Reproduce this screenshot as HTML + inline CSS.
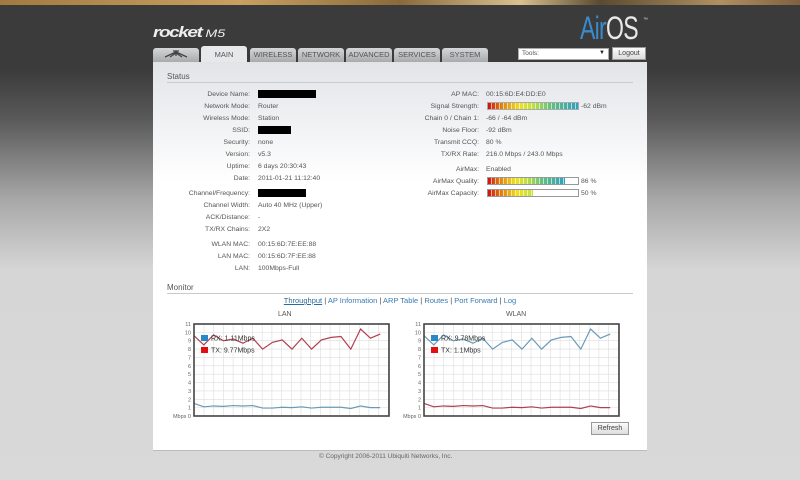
<!DOCTYPE html>
<html><head><meta charset="utf-8"><style>
*{margin:0;padding:0;box-sizing:border-box}
body{width:800px;height:480px;overflow:hidden;font-family:"Liberation Sans",sans-serif;background:linear-gradient(#3b3b3b 0px,#3b3b3b 70px,#5a5a5a 120px,#a8a8a8 200px,#d6d6d6 270px,#d9d9d9 480px);position:relative}
.top{position:absolute;left:0;top:0;width:800px;height:5px;background:linear-gradient(90deg,#a07a40,#c9a060 30%,#8a6a3a 50%,#d9c090 65%,#5a4a30 75%,#b09060 90%,#806040)}
.a{position:absolute}
.logo{left:153px;top:24px;color:#eee;font:italic bold 20px "Liberation Sans",sans-serif;letter-spacing:-1.5px;transform:scale(0.95,0.75);transform-origin:left top}
.logo span{font-size:15px;font-weight:normal;letter-spacing:0}
.air{left:580px;top:10px;font:32px "Liberation Sans",sans-serif;transform:scaleX(0.72);transform-origin:left;letter-spacing:-1px}
.tab{position:absolute;top:48px;height:14px;width:46px;background:linear-gradient(#d4d6d8,#a8aaac);color:#555;font-size:7.5px;text-align:center;line-height:14px;border-radius:3px 3px 0 0}
.tab.on{background:#e6e8ea;top:46px;height:16px;line-height:18px}
.panel{left:153px;top:62px;width:494px;height:388px;background:linear-gradient(#e2e4e8 0px,#ffffff 120px)}
.h{position:absolute;font-size:8px;color:#555;border-bottom:1px solid #c8cacc;width:466px;left:14px;padding-bottom:1px}
.r{position:absolute;font-size:6.8px;color:#555;white-space:nowrap}
.l{text-align:right;width:120px}
.blk{position:absolute;background:#000;height:8px}
.bar{position:absolute;left:487px;width:92px;height:8px;border:1px solid #999;background:#fff}
.bar i{display:block;height:100%;background:repeating-linear-gradient(90deg,transparent 0 3px,rgba(255,255,255,.6) 3px 4px),linear-gradient(90deg,#d01010,#e08010 15%,#f0e020 35%,#c0e040 50%,#60c080 70%,#30a0c0)}
.links{left:153px;width:494px;top:296px;text-align:center;font-size:7.5px;color:#3a7ab0}
.links u{color:#2a6aa0}
.btn{position:absolute;border:1px solid #999;background:linear-gradient(#fafafa,#ddd);font-size:7px;color:#444;text-align:center}
</style></head><body>
<div class="top"></div>
<div class="a logo">rocket <span>M5</span></div>
<div class="a air"><span style="color:#3a8acc">Air</span><span style="color:#e8e8e8">OS</span></div>
<div class="a" style="left:643px;top:17px;color:#ddd;font-size:5px">™</div>
<div class="tab" style="left:153px"><svg width="30" height="12" viewBox="0 0 30 12"><path d="M4 9 L15 4 L26 9 M9 9 L15 5 L21 9 M15 4 L15 8 M12 3 L18 3" stroke="#444" stroke-width="1.3" fill="none"/></svg></div>
<div class="tab on" style="left:201px">MAIN</div>
<div class="tab" style="left:250px">WIRELESS</div>
<div class="tab" style="left:298px">NETWORK</div>
<div class="tab" style="left:346px">ADVANCED</div>
<div class="tab" style="left:394px">SERVICES</div>
<div class="tab" style="left:442px">SYSTEM</div>
<div class="a" style="left:518px;top:48px;width:91px;height:12px;background:#fff;border:1px solid #aaa;font-size:6.5px;color:#555;padding:1px 3px">Tools:<span style="position:absolute;right:3px;top:1px;font-size:6px;color:#222">▼</span></div>
<div class="btn" style="left:612px;top:47px;width:34px;height:13px;line-height:11px">Logout</div>
<div class="a panel">
<div class="h" style="top:10px">Status</div>
<div class="h" style="top:221px">Monitor</div>
</div>
<div class="r l" style="left:130px;top:91px">Device Name:</div><div class="blk" style="left:258px;top:90px;width:58px"></div>
<div class="r l" style="left:130px;top:103px">Network Mode:</div><div class="r" style="left:258px;top:103px">Router</div>
<div class="r l" style="left:130px;top:115px">Wireless Mode:</div><div class="r" style="left:258px;top:115px">Station</div>
<div class="r l" style="left:130px;top:127px">SSID:</div><div class="blk" style="left:258px;top:126px;width:33px"></div>
<div class="r l" style="left:130px;top:139px">Security:</div><div class="r" style="left:258px;top:139px">none</div>
<div class="r l" style="left:130px;top:151px">Version:</div><div class="r" style="left:258px;top:151px">v5.3</div>
<div class="r l" style="left:130px;top:163px">Uptime:</div><div class="r" style="left:258px;top:163px">6 days 20:30:43</div>
<div class="r l" style="left:130px;top:175px">Date:</div><div class="r" style="left:258px;top:175px">2011-01-21 11:12:40</div>
<div class="r l" style="left:130px;top:190px">Channel/Frequency:</div><div class="blk" style="left:258px;top:189px;width:48px"></div>
<div class="r l" style="left:130px;top:202px">Channel Width:</div><div class="r" style="left:258px;top:202px">Auto 40 MHz (Upper)</div>
<div class="r l" style="left:130px;top:214px">ACK/Distance:</div><div class="r" style="left:258px;top:214px">-</div>
<div class="r l" style="left:130px;top:226px">TX/RX Chains:</div><div class="r" style="left:258px;top:226px">2X2</div>
<div class="r l" style="left:130px;top:241px">WLAN MAC:</div><div class="r" style="left:258px;top:241px">00:15:6D:7E:EE:88</div>
<div class="r l" style="left:130px;top:253px">LAN MAC:</div><div class="r" style="left:258px;top:253px">00:15:6D:7F:EE:88</div>
<div class="r l" style="left:130px;top:265px">LAN:</div><div class="r" style="left:258px;top:265px">100Mbps-Full</div>

<div class="r l" style="left:359px;top:91px">AP MAC:</div><div class="r" style="left:486px;top:91px">00:15:6D:E4:DD:E0</div>
<div class="r l" style="left:359px;top:103px">Signal Strength:</div><div class="bar" style="top:102px;border-color:#aaa"><i style="width:100%"></i></div><div class="r" style="left:581px;top:103px">-62 dBm</div>
<div class="r l" style="left:359px;top:115px">Chain 0 / Chain 1:</div><div class="r" style="left:486px;top:115px">-66 / -64 dBm</div>
<div class="r l" style="left:359px;top:127px">Noise Floor:</div><div class="r" style="left:486px;top:127px">-92 dBm</div>
<div class="r l" style="left:359px;top:139px">Transmit CCQ:</div><div class="r" style="left:486px;top:139px">80 %</div>
<div class="r l" style="left:359px;top:151px">TX/RX Rate:</div><div class="r" style="left:486px;top:151px">216.0 Mbps / 243.0 Mbps</div>
<div class="r l" style="left:359px;top:166px">AirMax:</div><div class="r" style="left:486px;top:166px">Enabled</div>
<div class="r l" style="left:359px;top:178px">AirMax Quality:</div><div class="bar" style="top:177px"><i style="width:86%"></i></div><div class="r" style="left:581px;top:178px">86 %</div>
<div class="r l" style="left:359px;top:190px">AirMax Capacity:</div><div class="bar" style="top:189px"><i style="width:50%;background:repeating-linear-gradient(90deg,transparent 0 3px,rgba(255,255,255,.6) 3px 4px),linear-gradient(90deg,#d01010,#e08010 30%,#f0e020 65%,#c0e040)"></i></div><div class="r" style="left:581px;top:190px">50 %</div>

<div class="a links"><u>Throughput</u> <span style="color:#444">|</span> AP Information <span style="color:#444">|</span> ARP Table <span style="color:#444">|</span> Routes <span style="color:#444">|</span> Port Forward <span style="color:#444">|</span> Log</div>
<div class="r" style="left:278px;top:311px;font-size:7px">LAN</div>
<div class="r" style="left:506px;top:311px;font-size:7px">WLAN</div>
<div id="c1" class="a" style="left:160px;top:320px"></div>
<div id="c2" class="a" style="left:390px;top:320px"></div>
<div class="btn" style="left:591px;top:422px;width:38px;height:13px;line-height:11px">Refresh</div>
<div class="a" style="left:153px;top:450px;width:494px;height:1px;background:#bbb"></div>
<div class="r" style="left:319px;top:453px;font-size:6.5px;color:#666">© Copyright 2006-2011 Ubiquiti Networks, Inc.</div>
<script>
var hi=[9.6,8.5,9.7,9.0,9.2,8.7,9.3,8.0,8.8,9.1,8.0,9.3,8.0,9.1,9.4,9.5,8.0,10.4,9.3,9.8];
var lo=[1.5,1.1,1.2,1.15,1.25,1.2,1.25,0.95,0.95,1.05,1.0,1.1,0.95,1.05,1.05,1.05,0.9,1.2,1.0,1.0];
function mk(id,topc,botc,rx,tx){
 var W=240,H=100,x0=34,x1=229,y0=4,y1=96,s=(y1-y0)/11;
 var g='<svg width="'+W+'" height="'+H+'" xmlns="http://www.w3.org/2000/svg" font-family="Liberation Sans" font-size="5.5" fill="#666">';
 g+='<rect x="'+x0+'" y="'+y0+'" width="'+(x1-x0)+'" height="'+(y1-y0)+'" fill="#fff"/>';
 for(var x=x0+10;x<x1;x+=9.7)g+='<line x1="'+x+'" y1="'+y0+'" x2="'+x+'" y2="'+y1+'" stroke="#ddd" stroke-width="0.6"/>';
 for(var i=0;i<=11;i++){var y=y1-i*s;g+='<line x1="'+x0+'" y1="'+y+'" x2="'+x1+'" y2="'+y+'" stroke="#ddd" stroke-width="0.6"/><text x="'+(x0-3)+'" y="'+(y+2)+'" text-anchor="end">'+(i==0?'Mbps 0':i)+'</text>';}
 function pl(d,c){var p='';for(var i=0;i<d.length;i++){p+=(x0+i*9.8)+','+(y1-d[i]*s)+' ';}return '<polyline points="'+p+'" fill="none" stroke="'+c+'" stroke-width="1.2"/>';}
 g+=pl(hi,topc)+pl(lo,botc);
 g+='<rect x="'+x0+'" y="'+y0+'" width="'+(x1-x0)+'" height="'+(y1-y0)+'" fill="none" stroke="#444" stroke-width="1.6"/>';
 g+='<rect x="'+(x0+7)+'" y="15" width="7" height="6" fill="#2a88c8"/><rect x="'+(x0+7)+'" y="27" width="7" height="6" fill="#e01010"/>';
 g+='<text x="'+(x0+17)+'" y="20.5" font-size="7" fill="#333">'+rx+'</text><text x="'+(x0+17)+'" y="32.5" font-size="7" fill="#333">'+tx+'</text></svg>';
 document.getElementById(id).innerHTML=g;}
mk('c1','#b04050','#6a9ab8','RX: 1.11Mbps','TX: 9.77Mbps');
mk('c2','#6a9ab8','#b04050','RX: 9.78Mbps','TX: 1.1Mbps');
</script>
</body></html>
